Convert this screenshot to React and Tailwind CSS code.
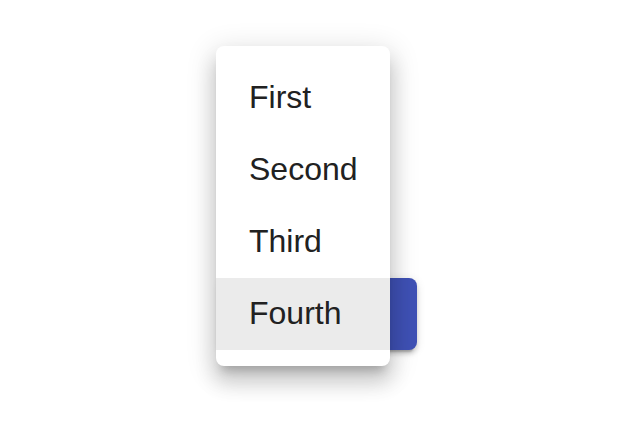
export default function App() {
  const items = ["First", "Second", "Third", "Fourth"];
  return (
    <div
      className="relative h-[438px] w-[622px] bg-white"
      style={{ fontFamily: '"Liberation Sans", Arial, sans-serif' }}
    >
      <div className="pl-[220px] pt-[278px]">
        <button className="h-[72px] w-[197px] rounded-[8px] bg-[#3f51b5] shadow-[0_6px_2px_-4px_rgba(0,0,0,0.2),0_4px_4px_0_rgba(0,0,0,0.14),0_2px_10px_0_rgba(0,0,0,0.12)]"></button>
      </div>
      <div className="absolute left-[216px] top-[46px] w-[174px] rounded-[8px] bg-white py-4 shadow-[0_10px_10px_-6px_rgba(0,0,0,0.2),0_16px_20px_2px_rgba(0,0,0,0.14),0_6px_28px_4px_rgba(0,0,0,0.12)]">
        {items.map((t, i) => (
          <div
            key={t}
            className={`flex h-[72px] items-center pl-[33px] pb-[2px] text-[32px] text-[#212121] ${
              i === 3 ? "bg-[#ebebeb]" : ""
            }`}
          >
            {t}
          </div>
        ))}
      </div>
    </div>
  );
}
